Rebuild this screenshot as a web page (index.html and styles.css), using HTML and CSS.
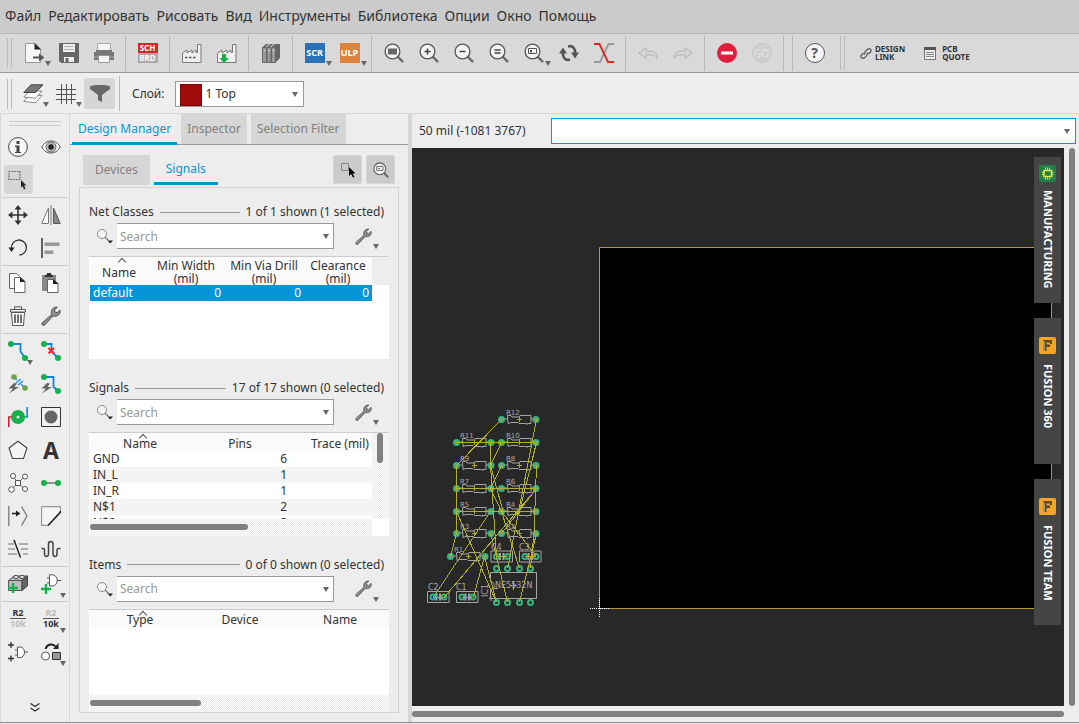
FILE: index.html
```html
<!DOCTYPE html>
<html lang="ru">
<head>
    <meta charset="UTF-8">
    <meta name="viewport" content="width=device-width, initial-scale=1.0">
    <title>Board</title>
    <link rel="stylesheet" href="styles.css">
</head>
<body>
    <svg class="sprite" aria-hidden="true">
        <symbol id="zoomBase" viewBox="0 0 20 20">
            <path d="M13.500 13.500L19 19" stroke="#666" stroke-width="2.400"/>
            <circle cx="8.500" cy="8.500" r="7.400" fill="#f2f2f2" stroke="#555" stroke-width="1.300"/>
        </symbol>
        <symbol id="find" viewBox="0 0 16 16">
            <circle cx="5" cy="6" r="4.500" fill="#f6f6f6" stroke="#888"/>
            <path d="M8.300 9.300L11.500 12.500" stroke="#888" stroke-width="1.500"/>
            <path d="M10.500 12.500h5.500L13.250 15.500z" fill="#222"/>
        </symbol>
        <symbol id="wrench" viewBox="0 0 20 20">
            <path d="M1 17L10.500 8.500C9.300 4 12.500.5 16.300 1.200L13.500 4.200L14 6L16 6.700L19 4C20 8 16 11.500 12 10L3.500 19.200C2 20 .3 18.500 1 17z" fill="#8c8c8c" stroke="#555" stroke-width="1"/>
        </symbol>
        <symbol id="bolt" viewBox="0 0 12 12">
            <path d="M6 1L.5 6.500L5 6.500L1 11.500L11 5L6.500 5L9 1.500z" fill="#666"/>
        </symbol>
        <symbol id="res" viewBox="0 0 44 14" overflow="visible">
            <path d="M7.500 3.500h3.500l1 1.500h7l1-1.500h11v8h-4v1l-1-1h-7l-1-1h-7l-3 1zM4 7h3M31 7h3" fill="none" stroke="#a6a6a6"/>
            <path d="M17 7.500h5M19.500 5v5" stroke="#a9a930"/>
            <use href="#pad" x="1.500" y="7.500"/>
            <use href="#pad" x="36" y="7.500"/>
        </symbol>
        <symbol id="fusion" viewBox="0 0 17 17">
            <rect width="17" height="17" rx="2" fill="#f5a524"/>
            <path d="M4 3h9v4h-2V5.500H7.500v2H11V10H7.500v4H4z" fill="#5b4a2e"/>
            <path d="M4 3l2 2v9H4z" fill="#9a958c"/>
        </symbol>
    </svg>

    <nav class="menubar">
        <a href="#">Файл</a>
        <a href="#">Редактировать</a>
        <a href="#">Рисовать</a>
        <a href="#">Вид</a>
        <a href="#">Инструменты</a>
        <a href="#">Библиотека</a>
        <a href="#">Опции</a>
        <a href="#">Окно</a>
        <a href="#">Помощь</a>
    </nav>

    <div class="toolbar">
        <span class="grip"></span>
        <button class="drop" title="Open"><svg viewBox="0 0 20 20"><path d="M1.500.5H11L16.500 6V19.500H1.500z" fill="#f7f7f7" stroke="#999"/><path d="M10.500 0L17 6.500H10.500z" fill="#222"/><path d="M9 13.500h6V10.500L20.500 14.500L15 18.500V15.500H9z" fill="#555"/></svg></button>
        <button title="Save"><svg viewBox="0 0 20 20"><path d="M0 0H20V20H2L0 18z" fill="#666"/><path d="M4 1H16V9H4z" fill="#eee"/><path d="M5.500 3.500h9M5.500 6.500h9" stroke="#aaa"/><path d="M5 14H15V19H5z" fill="#eee"/><path d="M6.500 15h3v4h-3z" fill="#666"/></svg></button>
        <button title="Print"><svg viewBox="0 0 20 20"><path d="M3.500.5h13v8h-13z" fill="#f4f4f4" stroke="#aaa"/><path d="M0 9h2V7h16v2h2v8H0z" fill="#777"/><path d="M0 14h20" stroke="#aaa"/><path d="M4.500 12.500h11v7h-11z" fill="#f4f4f4" stroke="#999"/></svg></button>
        <span class="sep"></span>
        <button title="Schematic"><span class="schbrd"><b>SCH</b><b>BRD</b></span></button>
        <span class="sep"></span>
        <button title="Manufacture"><svg viewBox="0 0 20 20"><path d="M.5 19.500V10L5 7v3l5-3v3l4-3V9.500h1.500V1.500h3.500v18z" fill="#f1f1f1" stroke="#777"/><path d="M3 14.500h11" stroke="#555" stroke-width="1.500" stroke-dasharray="2.500 1.500"/></svg></button>
        <button title="CAM"><svg viewBox="0 0 20 20"><path d="M.5 19.500V10L5 7v3l5-3v3l4-3V9.500h1.500V1.500h3.500v18z" fill="#f1f1f1" stroke="#777"/><path d="M5 11h4v4h3L7 20L2.500 15H5z" fill="#10b048"/></svg></button>
        <span class="sep"></span>
        <button title="Library"><svg viewBox="0 0 20 20"><path d="M1 4.500L5 1H19L14.500 4.500zM14.500 4.500L19 1V15L14.500 19.500z" fill="#666"/><path d="M1.500 4.500h4v15h-4zM6 4.500h4v15H6zM10.500 4.500h4v15h-4z" fill="#999" stroke="#666"/><path d="M2.500 7.500h2M7 7.500h2M11.500 7.500h2M5 4l4-3M9.500 4l4-3" stroke="#ddd"/></svg></button>
        <span class="sep"></span>
        <button class="drop" title="Script"><span class="tile blue">SCR</span></button>
        <button class="drop" title="ULP"><span class="tile orange">ULP</span></button>
        <span class="sep"></span>
        <button title="Zoom to fit"><svg viewBox="0 0 20 20"><use href="#zoomBase"/><path d="M4 5.500h9v6H4z" fill="#666"/></svg></button>
        <button title="Zoom in"><svg viewBox="0 0 20 20"><use href="#zoomBase"/><path d="M5.500 8.500h6M8.500 5.500v6" stroke="#444" stroke-width="1.500"/></svg></button>
        <button title="Zoom out"><svg viewBox="0 0 20 20"><use href="#zoomBase"/><path d="M5.500 8.500h6" stroke="#444" stroke-width="1.500"/></svg></button>
        <button title="Zoom redraw"><svg viewBox="0 0 20 20"><use href="#zoomBase"/><path d="M5.500 7h6M5.500 10h6" stroke="#444" stroke-width="1.400"/></svg></button>
        <button class="drop" title="Zoom select"><svg viewBox="0 0 20 20"><use href="#zoomBase"/><path d="M4.500 5.500h8v5h-8z" fill="none" stroke="#555"/><path d="M6 7h2v2.500H6z" fill="#555"/></svg></button>
        <button title="Redraw"><svg viewBox="0 0 20 20"><path d="M11 16.500C6 18 3.500 14 4 10M9 3.500C14 2 16.500 6 16 10" fill="none" stroke="#555" stroke-width="2.600"/><path d="M0 10.500L4 4.500L8 10.500zM12 9.500H20L16 15.500z" fill="#555"/></svg></button>
        <button title="Ripup"><svg viewBox="0 0 20 20"><path d="M20 1h-5.500L6 19H0" fill="none" stroke="#999" stroke-width="1.800"/><path d="M0 1h5.500L14 19h6" fill="none" stroke="#d42a20" stroke-width="1.800"/></svg></button>
        <span class="sep"></span>
        <button title="Undo" disabled><svg viewBox="0 0 20 20"><path d="M.8 10L8 4.500V8h5c4 0 6 3 6.200 7.500C17.500 12.500 16 12 13 12H8v3.500z" fill="#d4d4d4" stroke="#b3b3b3"/></svg></button>
        <button title="Redo" disabled><svg viewBox="0 0 20 20"><path d="M19.200 10L12 4.500V8H7C3 8 1 11 .8 15.500C2.500 12.500 4 12 7 12h5v3.500z" fill="#d4d4d4" stroke="#b3b3b3"/></svg></button>
        <span class="sep"></span>
        <button title="Stop"><svg viewBox="0 0 20 20"><circle cx="10" cy="10" r="10" fill="#df1f3d"/><path d="M4 10h12" stroke="#fff" stroke-width="3"/></svg></button>
        <button title="Go" disabled><span class="go">GO</span></button>
        <span class="sep"></span>
        <span class="sep"></span>
        <button title="Help"><span class="help">?</span></button>
        <span class="grip end"></span>
        <button class="labelled"><svg viewBox="0 0 12 12"><path d="M5 7C3.500 5.500 6 3 7.500 1.700C9.500 0 12.500 2.500 10.500 4.500L8.500 6.500M7 5C8.500 6.500 6 9 4.500 10.300C2.500 12 -.5 9.500 1.500 7.500L3.500 5.500" fill="none" stroke="#555" stroke-width="1.200"/></svg><span>DESIGN<br>LINK</span></button>
        <button class="labelled quote"><svg viewBox="0 0 12 13"><path d="M.5.5h11v12H.5z" fill="#eee" stroke="#777"/><path d="M0 1.500h12" stroke="#555" stroke-width="3"/><path d="M2 5.500h8M2 7.500h8M2 9.500h8" stroke="#888"/></svg><span>PCB<br>QUOTE</span></button>
    </div>

    <div class="toolbar second">
        <span class="grip"></span>
        <button class="drop" title="Layers"><svg viewBox="0 0 20 20"><path d="M.8 17.500L6.500 11.500H19L12.500 18.800z" fill="#fff" stroke="#888"/><path d="M.8 13L6.500 7H19L12.500 14.300z" fill="#fff" stroke="#888"/><path d="M.8 8.500L8 .8H20L12.500 8.500z" fill="#777" stroke="#444"/></svg></button>
        <button class="drop" title="Grid"><svg viewBox="0 0 20 20"><path d="M0 5.500h20M0 10.500h20M0 15.500h20M5.500 0v20M10.500 0v20M15.500 0v20" stroke="#555"/></svg></button>
        <button class="on" title="Filter"><svg viewBox="0 0 20 20"><path d="M0 2C5 .5 15 .5 20 2V5L12 11V18L8 16V11L0 5z" fill="#666"/></svg></button>
        <span class="sep"></span>
        <label for="layer">Слой:</label>
        <span class="layer">
            <select id="layer">
                <option>1 Top</option>
                <option>16 Bottom</option>
            </select>
            <i class="arrow"></i>
        </span>
    </div>

    <main>
        <aside class="palette">
            <span class="hgrip"></span>
            <div class="group">
                <button title="Info"><svg viewBox="0 0 20 20"><circle cx="10" cy="10" r="9.400" fill="#f6f6f6" stroke="#444"/><path d="M8.500 4h3v3h-3zM7 8.500h4.500v6.500H13v1H7v-1h1.500V10H7z" fill="#444"/></svg></button>
                <button title="Show"><svg viewBox="0 0 20 20"><path d="M.8 10C5 2 15 2 19.200 10C15 18 5 18 .8 10z" fill="#fff" stroke="#444"/><circle cx="10" cy="10" r="5" fill="#bbb" stroke="#666"/><circle cx="10" cy="10" r="2.700" fill="#222"/></svg></button>
                <button class="on" title="Group"><svg viewBox="0 0 20 20"><path d="M1 1.500h11v8H1z" fill="none" stroke="#555" stroke-width="1.200" stroke-dasharray="1.500 1.200"/><path d="M13 10l5.500 5.500h-2.500l1.500 3-1.500 1-1.500-3.500-1.500 1.500z" fill="#222"/></svg></button>
            </div>
            <div class="group">
                <button title="Move"><svg viewBox="0 0 20 20"><path d="M3 10h14M10 3v14" stroke="#333" stroke-width="1.600"/><path d="M0 10l4.500-3.500v7zM20 10l-4.500-3.500v7zM10 0L6.500 4.500h7zM10 20l-3.500-4.500h7z" fill="#333"/></svg></button>
                <button title="Mirror"><svg viewBox="0 0 20 20"><path d="M7.500 3v15.500H.8z" fill="#fff" stroke="#777"/><path d="M12.500 3v15.500h6.700z" fill="#888" stroke="#555"/><path d="M10 0v20" stroke="#777"/></svg></button>
                <button title="Rotate"><svg viewBox="0 0 20 20"><path d="M3.500 10.500A7.500 7.500 0 1 1 11.500 17" fill="none" stroke="#333" stroke-width="1.300"/><path d="M.5 9.500H6.500L3.500 14z" fill="#222"/></svg></button>
                <button title="Align"><svg viewBox="0 0 20 20"><path d="M1 0v20" stroke="#333" stroke-width="1.500"/><path d="M3.500 4.500h15v3.500h-15zM3.500 12.500h9v3.500h-9z" fill="#999"/></svg></button>
            </div>
            <div class="group">
                <button title="Copy"><svg viewBox="0 0 20 20"><path d="M1.500.5h7l3 3v12h-10z" fill="#f7f7f7" stroke="#666"/><path d="M6.500 4.500h6l4.500 4v11H6.500z" fill="#fff" stroke="#666"/><path d="M12 4l5.500 5H12z" fill="#222"/></svg></button>
                <button title="Paste"><svg viewBox="0 0 20 20"><path d="M1 2h14v16H1z" fill="#888"/><path d="M4 4V2l2-.5V0h4v1.500l2 .5v2z" fill="#333"/><path d="M6.500 6.500h6l4.500 4v9H6.500z" fill="#fff" stroke="#666"/><path d="M12 6l5.500 5H12z" fill="#222"/></svg></button>
                <button title="Delete"><svg viewBox="0 0 20 20"><path d="M6.500 3V.8h7V3" fill="none" stroke="#555"/><path d="M2.500 3.500h15v2.500h-15zM3.500 6.500h13l-1 13h-11z" fill="#f7f7f7" stroke="#555"/><path d="M7 8.500v8.500M10 8.500v8.500M13 8.500v8.500" stroke="#444" stroke-width="1.500"/></svg></button>
                <button title="Change"><svg viewBox="0 0 20 20"><use href="#wrench"/></svg></button>
            </div>
            <div class="group">
                <button class="drop" title="Route"><svg viewBox="0 0 20 20"><path d="M3 3h9.500v7.500L17 17" fill="none" stroke="#0b87e0" stroke-width="1.800"/><circle cx="3" cy="3" r="3" fill="#17b04c"/><circle cx="17" cy="17" r="3" fill="#17b04c"/></svg></button>
                <button title="Ripup"><svg viewBox="0 0 20 20"><path d="M3 3h7.500v7.500L17 17" fill="none" stroke="#0b87e0" stroke-width="1.800"/><circle cx="3" cy="3" r="3" fill="#17b04c"/><circle cx="17" cy="17" r="3" fill="#17b04c"/><path d="M7.500 7l5.500 5.500M13 7l-5.500 5.500" stroke="#f22b2b" stroke-width="2.200"/></svg></button>
                <button title="Fanout"><svg viewBox="0 0 20 20"><use href="#bolt" x="0" y="8" width="12" height="12"/><path d="M8 9l5-4M10 11l5-4M6 3l3 3M13 10l4 4" stroke="#2a92e0" stroke-width="1.500"/><circle cx="6" cy="3" r="2.800" fill="#6ca34a"/><circle cx="17" cy="14" r="2.800" fill="#6ca34a"/></svg></button>
                <button title="Autoroute"><svg viewBox="0 0 20 20"><use href="#bolt" x="0" y="8" width="12" height="12"/><path d="M3 3h9.500v10L17 17" fill="none" stroke="#0b87e0" stroke-width="1.800"/><circle cx="3" cy="3" r="3" fill="#17b04c"/><circle cx="17" cy="17" r="3" fill="#17b04c"/></svg></button>
                <button title="Via"><svg viewBox="0 0 20 20"><path d="M.8 20V10H5" fill="none" stroke="#d3202f" stroke-width="1.600"/><path d="M19.200 0v10H15" fill="none" stroke="#0b87e0" stroke-width="1.600"/><circle cx="10" cy="10" r="7" fill="#17b04c"/><circle cx="10" cy="10" r="1.500" fill="#fff"/></svg></button>
                <button title="Hole"><svg viewBox="0 0 20 20"><path d="M.5.5h19v19H.5z" fill="#f0f0f0" stroke="#333"/><circle cx="10" cy="10" r="6.500" fill="#666"/></svg></button>
                <button title="Polygon"><svg viewBox="0 0 20 20"><path d="M10 1.200L19 8L15.500 18.500h-11L1 8z" fill="#f4f4f4" stroke="#444" stroke-width="1.100"/></svg></button>
                <button title="Text"><span class="letter">A</span></button>
                <button title="Ratsnest"><svg viewBox="0 0 20 20"><path d="M5 3l5 7L17 3M3 17l7-7 7 6" fill="none" stroke="#666"/><g fill="#fff" stroke="#555"><circle cx="5" cy="3" r="2.500"/><circle cx="17" cy="3.500" r="2.500"/><circle cx="3.500" cy="16.500" r="2.800"/><circle cx="17" cy="16" r="2.500"/><path d="M7.500 7.500h5v5h-5z"/></g></svg></button>
                <button title="Signal"><svg viewBox="0 0 20 20"><path d="M3 10h14" stroke="#777" stroke-width="1.500"/><circle cx="3" cy="10" r="3" fill="#17b04c"/><circle cx="17" cy="10" r="3" fill="#17b04c"/></svg></button>
                <button title="Split"><svg viewBox="0 0 20 20"><path d="M.8 0v20" stroke="#777" stroke-width="1.300"/><path d="M4 7.500h5" stroke="#222" stroke-width="1.600"/><path d="M8 4.500l4.500 3-4.500 3z" fill="#222"/><path d="M13.500.5L19 10l-5.500 9.500" fill="none" stroke="#777" stroke-width="1.300"/></svg></button>
                <button title="Miter"><svg viewBox="0 0 20 20"><path d="M19.500 6V.5H.5v19H7" fill="#f5f5f5" stroke="#999" stroke-width="1.300"/><path d="M19.500 5v1L7 19.500" fill="none" stroke="#222" stroke-width="1.600"/></svg></button>
                <button title="Slice"><svg viewBox="0 0 20 20"><path d="M0 5h6M11 5h9M0 10h7M13 10h7M0 15h9M15 15h5" stroke="#999" stroke-width="1.400"/><path d="M6 1L12.500 18.500" stroke="#222" stroke-width="1.500"/></svg></button>
                <button title="Meander"><svg viewBox="0 0 20 20"><path d="M.5 9.500H2Q3.500 9.500 3.500 11.500V14.500Q3.500 17.500 5.500 17.500T7.500 14.500V5Q7.500 2.500 9.750 2.500T12 5V14.500Q12 17.500 14 17.500T16 14.500V11.500Q16 9.500 17.500 9.500H19.500" fill="none" stroke="#444" stroke-width="1.500"/></svg></button>
            </div>
            <div class="group">
                <button title="Add"><svg viewBox="0 0 20 20"><path d="M.5 6.500L6 2h13.500L14 6.500v10H.5z" fill="#bbb" stroke="#555"/><path d="M14 6.500L19.500 2v10L14 16.500z" fill="#666" stroke="#444"/><path d="M.5 6.500H14" stroke="#555"/><ellipse cx="8" cy="3" rx="2.500" ry="1.500" fill="#eee" stroke="#444"/><ellipse cx="14" cy="3" rx="2.500" ry="1.500" fill="#eee" stroke="#444"/><path d="M5 9v10M0 14h10" stroke="#17b04c" stroke-width="2.400"/></svg></button>
                <button class="drop" title="Add part"><svg viewBox="0 0 20 20"><path d="M8.500.8H11C18 1 18 12 11 12H8.500zM6 4h2.500M6 9h2.500M16 6.500h4" fill="#fff" stroke="#555"/><path d="M5 10v10M0 15h10" stroke="#17b04c" stroke-width="2.400"/></svg></button>
            </div>
            <div class="group last">
                <button title="Name"><span class="r2"><b>R2</b><b class="dim">10k</b></span></button>
                <button class="drop" title="Value"><span class="r2"><b class="dim">R2</b><b>10k</b></span></button>
                <button title="Smash"><svg viewBox="0 0 20 20"><path d="M9.500 5H12C18 5 18 15.500 12 15.500H9.500zM7 8h2.500M7 13h2.500M16.500 10h3.500" fill="#fff" stroke="#555"/><path d="M3 0v6M0 3h6M3 13.500v6M0 16.500h6" stroke="#333" stroke-width="1.400"/></svg></button>
                <button class="drop" title="Replace"><svg viewBox="0 0 20 20"><path d="M4.500 7C6 2 12 1 14.500 4.500" fill="none" stroke="#222" stroke-width="2"/><path d="M12 7h5.500V1z" fill="#222"/><circle cx="4.500" cy="14" r="4" fill="#fff" stroke="#555"/><path d="M11.500 10.500h8v7h-8z" fill="#999" stroke="#333"/></svg></button>
            </div>
            <button class="more" title="More"><svg viewBox="0 0 10 9"><path d="M.5.5L5 3.500L9.500.5M.5 5L5 8L9.500 5" fill="none" stroke="#333" stroke-width="1.300"/></svg></button>
        </aside>

        <section class="panel">
            <div class="tabs">
                <button class="tab active">Design Manager</button>
                <button class="tab">Inspector</button>
                <button class="tab">Selection Filter</button>
            </div>
            <div class="subtabs">
                <button class="tab">Devices</button>
                <button class="tab active">Signals</button>
                <button class="tool" title="Select"><svg viewBox="0 0 16 16"><path d="M1.500 1.500h7v7h-7z" fill="none" stroke="#888"/><path d="M9 5l6.500 6.500H12.500l2 3.500-1.500.5-2-3.500L9 14z" fill="#000"/></svg></button>
                <button class="tool" title="Zoom to selection"><svg viewBox="0 0 20 20"><use href="#zoomBase"/><path d="M4.500 5.500h8v5h-8zM6 8h3" fill="none" stroke="#555"/></svg></button>
            </div>
            <div class="frame">
                <section class="block">
                    <div class="head"><span>Net Classes</span><hr><span>1 of 1 shown (1 selected)</span></div>
                    <div class="searchrow">
                        <svg class="find"><use href="#find"/></svg>
                        <span class="combo"><input type="text" placeholder="Search" aria-label="Search net classes"><i class="arrow"></i></span>
                        <button class="drop" title="Options"><svg><use href="#wrench"/></svg></button>
                    </div>
                    <div class="grid">
                        <div class="view">
                            <table class="classes">
                                <colgroup><col class="c1"><col class="c2"><col class="c3"><col class="c4"></colgroup>
                                <thead><tr><th class="sorted">Name</th><th>Min Width<br>(mil)</th><th>Min Via Drill<br>(mil)</th><th>Clearance<br>(mil)</th></tr></thead>
                                <tbody><tr class="selected"><td>default</td><td>0</td><td>0</td><td>0</td></tr></tbody>
                            </table>
                        </div>
                        <div class="stub"></div>
                    </div>
                </section>
                <section class="block">
                    <div class="head"><span>Signals</span><hr><span>17 of 17 shown (0 selected)</span></div>
                    <div class="searchrow">
                        <svg class="find"><use href="#find"/></svg>
                        <span class="combo"><input type="text" placeholder="Search" aria-label="Search signals"><i class="arrow"></i></span>
                        <button class="drop" title="Options"><svg><use href="#wrench"/></svg></button>
                    </div>
                    <div class="grid">
                        <div class="view">
                            <table class="wide">
                                <thead><tr><th class="sorted">Name</th><th>Pins</th><th>Trace (mil)</th></tr></thead>
                                <tbody>
                                    <tr><td>GND</td><td>6</td><td></td></tr>
                                    <tr><td>IN_L</td><td>1</td><td></td></tr>
                                    <tr><td>IN_R</td><td>1</td><td></td></tr>
                                    <tr><td>N$1</td><td>2</td><td></td></tr>
                                    <tr><td>N$2</td><td>2</td><td></td></tr>
                                </tbody>
                            </table>
                        </div>
                        <div class="vscroll"><i></i></div>
                        <div class="hscroll signals"><i></i></div>
                    </div>
                </section>
                <section class="block">
                    <div class="head"><span>Items</span><hr><span>0 of 0 shown (0 selected)</span></div>
                    <div class="searchrow">
                        <svg class="find"><use href="#find"/></svg>
                        <span class="combo"><input type="text" placeholder="Search" aria-label="Search items"><i class="arrow"></i></span>
                        <button class="drop" title="Options"><svg><use href="#wrench"/></svg></button>
                    </div>
                    <div class="grid full">
                        <div class="view">
                            <table class="wide">
                                <thead><tr><th class="sorted">Type</th><th>Device</th><th>Name</th></tr></thead>
                            </table>
                        </div>
                        <div class="hscroll items"><i></i></div>
                    </div>
                </section>
            </div>
        </section>

        <section class="editor">
            <div class="command">
                <label for="cmd">50 mil (-1081 3767)</label>
                <span class="cmdbox"><input type="text" id="cmd"><i class="arrow"></i></span>
            </div>
            <div class="board">
                <svg class="drawing">
                    <defs>
                        <g id="pad"><circle r="2.500" fill="#a08b80" stroke="#35b57c" stroke-width="2"/></g>
                        <g id="hole"><circle r="2.500" fill="#282828" stroke="#35b57c" stroke-width="2"/></g>
                        <g id="cap"><path d="M-5.500-5.500h21.500v11h-21.500z" fill="none" stroke="#a6a6a6"/><path d="M3.500-3.500v7M7-3.500v7" stroke="#a6a6a6" stroke-width="2"/><use href="#hole"/><use href="#hole" x="11"/></g>
                    </defs>
                    <g transform="translate(-412 -148)">
                        <path d="M599.500 247.500h452v361h-452z" fill="#000" stroke="#b9973a"/>
                        <path d="M590 608.500h20M599.500 598v20" stroke="#fff" stroke-dasharray="1 1"/>

                        <!-- resistors -->
                        <g class="parts">
                            <use href="#res" x="500" y="412" width="44" height="14"/>
                            <use href="#res" x="500" y="435" width="44" height="14"/>
                            <use href="#res" x="500" y="458" width="44" height="14"/>
                            <use href="#res" x="500" y="481" width="44" height="14"/>
                            <use href="#res" x="500" y="504" width="44" height="14"/>
                            <use href="#res" x="500" y="526" width="44" height="14"/>
                            <use href="#res" x="455" y="435" width="44" height="14"/>
                            <use href="#res" x="455" y="458" width="44" height="14"/>
                            <use href="#res" x="455" y="481" width="44" height="14"/>
                            <use href="#res" x="455" y="504" width="44" height="14"/>
                            <use href="#res" x="455" y="526" width="44" height="14"/>
                            <use href="#res" x="449" y="549" width="44" height="14"/>
                        </g>

                        <!-- capacitors and the op-amp -->
                        <use href="#cap" x="496.500" y="556.500"/>
                        <use href="#cap" x="525" y="556.500"/>
                        <use href="#cap" x="433" y="597"/>
                        <use href="#cap" x="462" y="597"/>
                        <path d="M490.500 572.500h46v26h-46v-9c5 0 5-8 0-8zM489 598.500h4M491 596v5M494 588.500h4" fill="none" stroke="#a6a6a6"/>
                        <g>
                            <use href="#hole" x="496.500" y="568.500"/><use href="#hole" x="507.500" y="568.500"/><use href="#hole" x="519.500" y="568.500"/><use href="#hole" x="530.500" y="568.500"/>
                            <use href="#hole" x="496.500" y="602.500"/><use href="#hole" x="507.500" y="602.500"/><use href="#hole" x="519.500" y="602.500"/><use href="#hole" x="530.500" y="602.500"/>
                        </g>
                        <g class="ref">
                            <text x="506" y="415">R12</text><text x="506" y="438">R10</text><text x="506" y="461">R8</text><text x="506" y="484">R6</text><text x="506" y="507">R4</text><text x="506" y="529">R2</text>
                            <text x="460" y="438">R11</text><text x="460" y="461">R9</text><text x="460" y="484">R7</text><text x="460" y="507">R5</text><text x="460" y="529">R3</text><text x="454" y="552">R1</text>
                        </g>
                        <g class="ref big">
                            <text x="491" y="550">C4</text><text x="519" y="550">C3</text><text x="428" y="590">C2</text><text x="456" y="590">C1</text>
                            <text x="495" y="588">NE5532N</text>
                            <text transform="translate(488 597) rotate(-90)">IC1</text>
                        </g>

                        <!-- airwires -->
                        <path class="air" d="M501.500 419.500L456.500 465.500V533.500L450.500 556.500M456.500 442.500H536.500M490.500 442.500V465.500L503 511M501.500 442.500L490.500 465.500M501.500 465.500L490.500 488.500M456.500 488.500H536.500M536.500 419.500L507.500 568.500M536.500 442.500L519.500 511M536.500 465.500L534 533.500L530.500 568.500M456.500 511.500H536.500M456.500 511.500L496.500 602.500M490.500 511.500L433.500 597M536.500 488.500L444.500 597M473.500 597L484.500 556.500M484.500 556.500L496.500 602.500M490.500 465.500L496.500 556.500L507.500 602.500M490.500 488.500L501.500 511.500L536.500 556.500M501.500 511.500L519.500 568.500M519.500 602.500L536.500 533.500M490.500 533.500L496.500 556.500M501.500 533.500L536.500 488.500M433 597H445M462 597H473M496 556.500H508M525 556.500H536M510 585.500h7M513.500 581v9"/>
                    </g>
                </svg>
                <div class="sidetabs">
                    <button><svg viewBox="0 0 17 17"><rect width="17" height="17" rx="2" fill="#218046"/><path d="M5 5.500h7.500v6H5z" fill="none" stroke="#f2e442" stroke-width="1.500"/><path d="M6.500 2.500v2M8.500 2.500v2M10.500 2.500v2M6.500 12.500v2M8.500 12.500v2M10.500 12.500v2M3 7.500h2M3 9.500h2M12.500 7.500h2M12.500 9.500h2" stroke="#f2e442"/></svg>MANUFACTURING</button>
                    <button><svg viewBox="0 0 17 17"><use href="#fusion"/></svg>FUSION 360</button>
                    <button><svg viewBox="0 0 17 17"><use href="#fusion"/></svg>FUSION TEAM</button>
                </div>
            </div>
            <div class="vbar"></div>
            <div class="hbar"></div>
        </section>
    </main>
</body>
</html>
```
FILE: styles.css
```css
* {
    box-sizing: border-box;
}
body {
    margin: 0;
    height: 100vh;
    display: flex;
    flex-direction: column;
    overflow: hidden;
    background-color: #ededed;
    color: #333;
    font: 12px/16px "Noto Sans", sans-serif;
}
button {
    position: relative;
    display: flex;
    align-items: center;
    justify-content: center;
    padding: 0;
    border: none;
    background: none;
    color: inherit;
    font: inherit;
}
button svg {
    display: block;
    width: 20px;
    height: 20px;
}
input, select {
    border: none;
    border-radius: 0;
    background-color: #fff;
    color: #333;
    font: inherit;
    outline: none;
}
.sprite {
    position: absolute;
    width: 0;
    height: 0;
}
/* small dropdown triangles */
.arrow, .drop::after {
    position: absolute;
    border: 3px solid transparent;
    border-top: 5px solid #666;
    border-bottom: none;
    pointer-events: none;
}
.drop::after {
    content: "";
    right: 0;
    bottom: 6px;
}

/* menu */
.menubar {
    display: flex;
    flex: none;
    align-items: center;
    gap: 7px;
    height: 34px;
    padding: 0 5px 2px;
    background-color: #cbcbcb;
    border-bottom: 1px solid #b5b5b5;
    font-size: 14px;
}
.menubar a {
    color: #333;
    text-decoration: none;
}

/* toolbars */
.toolbar {
    display: flex;
    flex: none;
    align-items: center;
    height: 39px;
    padding-left: 7px;
    background-color: #d9d9d9;
    border-bottom: 1px solid #999;
}
.toolbar button {
    width: 35px;
    height: 38px;
}
.grip {
    width: 5px;
    height: 30px;
    margin-right: 4px;
    border: solid #bbb;
    border-width: 0 1px;
}
.grip.end {
    height: 34px;
    margin: 0 15px 0 8px;
}
.sep {
    width: 1px;
    height: 35px;
    margin: 0 4px;
    background-color: #b8b8b8;
}
.schbrd {
    display: grid;
    width: 20px;
    height: 20px;
    background-color: #aaa;
    color: #fff;
    font-size: 8px;
    line-height: 10px;
}
.schbrd b:first-child {
    background-color: #cf2a27;
}
.tile {
    width: 20px;
    height: 20px;
    color: #fff;
    font-size: 9px;
    font-weight: bold;
    line-height: 20px;
}
.blue {
    background-color: #2a72b8;
}
.orange {
    background-color: #dc833e;
}
.go, .help {
    width: 20px;
    height: 20px;
    border: 1px solid #c6c6c6;
    border-radius: 50%;
    background-color: #cfcfcf;
    color: #e4e4e4;
    font-size: 10px;
    line-height: 18px;
}
.help {
    border-color: #555;
    background-color: #f5f5f5;
    color: #555;
    font-size: 14px;
    font-weight: bold;
}
.toolbar .labelled {
    width: auto;
    gap: 3px;
    font-size: 8px;
    font-weight: bold;
    line-height: 8px;
    text-align: left;
}
.labelled svg {
    width: 12px;
    height: 13px;
}
.toolbar .quote {
    gap: 6px;
    margin-left: 19px;
}
.toolbar.second {
    height: 41px;
    padding-top: 1px;
    background-color: #eee;
    border-color: #d6d6d6;
}
.second button {
    width: 33px;
    height: 38px;
}
.second .on {
    width: 31px;
    height: 31px;
    margin-left: 2px;
    background-color: #d6d6d6;
    border-radius: 2px;
}
.second label {
    margin: 0 10px 0 8px;
}
.layer {
    position: relative;
    width: 129px;
    height: 26px;
}
.layer select {
    appearance: none;
    width: 100%;
    height: 100%;
    padding: 0 20px 0 30px;
    border: 1px solid #999;
}
.layer::before {
    content: "";
    position: absolute;
    top: 3px;
    left: 5px;
    width: 20px;
    height: 20px;
    background-color: #a00b0b;
    border: 1px solid #7d0606;
}
.layer .arrow {
    top: 11px;
    right: 6px;
}

main {
    display: flex;
    flex: 1;
    min-height: 0;
    margin-bottom: 1px;
    border-bottom: 1px solid #888;
}

/* tool palette */
.palette {
    display: flex;
    flex-direction: column;
    flex: none;
    width: 70px;
    padding: 0 1px;
    border: solid #d6d6d6;
    border-width: 0 1px;
}
.hgrip {
    flex: none;
    height: 5px;
    margin: 7px 7px 4px;
    border: solid #ccc;
    border-width: 1px 0;
}
.group {
    display: grid;
    grid-template-columns: 29px 29px;
    gap: 4px;
    padding: 2px 2px 3px;
    border-bottom: 1px solid #ccc;
}
.group.last {
    border-bottom: none;
}
.group button {
    width: 29px;
    height: 29px;
    padding-right: 1px;
}
.group .on {
    background-color: #d6d6d6;
    border-radius: 2px;
}
.group .drop::after {
    right: 0;
    bottom: 0;
}
.letter {
    font: bold 23px/28px "Noto Sans", sans-serif;
}
.r2 {
    display: grid;
    font-size: 9px;
    line-height: 10px;
}
.r2 b:first-child {
    border-bottom: 1px solid #555;
}
.dim {
    color: #bbb;
}
.more {
    margin: auto auto 10px;
}
.more svg {
    width: 10px;
    height: 9px;
}

/* design manager */
.panel {
    display: flex;
    flex-direction: column;
    flex: none;
    width: 342px;
    border-right: 4px solid #d6d6d6;
}
.tabs {
    display: flex;
    gap: 4px;
    height: 31px;
    padding-left: 2px;
    border-bottom: 1px solid #999;
}
.tab {
    height: 30px;
    padding: 0 6px;
    background-color: #d6d6d6;
    color: #808080;
}
.tab.active {
    height: 31px;
    padding-top: 2px;
    background: none;
    border-bottom: 3px solid #0696d7;
    color: #0696d7;
}
.subtabs {
    display: flex;
    gap: 4px;
    height: 31px;
    margin: 10px 13px 1px;
}
.subtabs .tab {
    padding: 0 12px;
}
.subtabs .active {
    height: 30px;
}
.tool {
    width: 29px;
    height: 29px;
    background-color: #cbcbcb;
    border: 1px solid #d6d6d6;
    border-radius: 2px;
}
.tool svg {
    width: 16px;
    height: 16px;
}
.active + .tool {
    margin-left: auto;
}
.frame {
    display: flex;
    flex-direction: column;
    flex: 1;
    gap: 20px;
    min-height: 0;
    margin: 0 9px 9px;
    padding: 15px 9px 0;
    border: 1px solid #d3d3d3;
}
.block {
    display: flex;
    flex-direction: column;
    flex: 1;
    min-height: 0;
}
.head {
    display: flex;
    align-items: center;
    gap: 6px;
    padding: 1px 5px 0 0;
}
.head hr {
    flex: 1;
    margin: 0;
    border: none;
    border-top: 1px solid #999;
}
.searchrow {
    display: flex;
    align-items: center;
    margin: 3px 10px 7px 8px;
}
.find {
    width: 16px;
    height: 16px;
    margin-right: 4px;
}
.combo {
    position: relative;
    flex: 1;
    height: 26px;
}
.combo input {
    width: 100%;
    height: 100%;
    padding: 0 20px 0 3px;
    border: solid #999;
    border-width: 1px 1px 1px 0;
}
.combo input::placeholder {
    color: #999;
}
.combo .arrow {
    top: 11px;
    right: 5px;
}
.searchrow button {
    width: 24px;
    height: 26px;
    margin-left: 21px;
    justify-content: flex-start;
}
.searchrow button svg {
    width: 17px;
    height: 17px;
}
.searchrow .drop::after {
    bottom: 0;
}
.grid {
    display: grid;
    grid-template: 1fr auto / 1fr 17px;
    flex: 1;
    min-height: 0;
    padding-left: 1px;
    background-color: #fff;
    border-top: 1px solid #ccc;
}
.grid.full {
    grid-template-columns: 1fr;
}
.view {
    overflow: hidden;
    min-height: 0;
}
.stub {
    height: 28px;
    background-color: #ededed;
}
table {
    table-layout: fixed;
    border-collapse: collapse;
    width: 100%;
}
table.wide {
    width: 300px;
}
.c1 {
    width: 58px;
}
.c2 {
    width: 76px;
}
.c3 {
    width: 80px;
}
th {
    position: relative;
    height: 18px;
    padding: 2px 0 0;
    background-color: #fafafa;
    font-weight: normal;
    line-height: 13px;
    white-space: nowrap;
}
.sorted::before {
    content: "";
    position: absolute;
    top: 2px;
    left: 50%;
    width: 5px;
    height: 5px;
    border: solid #555;
    border-width: 1px 0 0 1px;
    transform: rotate(45deg);
}
td {
    height: 16px;
    padding: 0 3px;
    line-height: 16px;
    text-align: right;
}
td:first-child {
    text-align: left;
}
tbody tr:nth-child(even) {
    background-color: #f4f4f4;
}
.selected {
    background-color: #0696d7;
    color: #fff;
}
.vscroll, .hscroll {
    background: repeating-conic-gradient(#fff 0 25%, #eaeaea 0 50%) 0 0 / 2px 2px;
}
.vscroll {
    padding-left: 5px;
}
.vscroll i {
    display: block;
    width: 6px;
    height: 30px;
    border-radius: 3px;
    background-color: #808080;
}
.hscroll {
    height: 17px;
    padding-top: 5px;
}
.hscroll i {
    display: block;
    height: 6px;
    border-radius: 3px;
    background-color: #808080;
}
.signals i {
    width: 56%;
}
.items i {
    width: 37%;
}

/* board editor */
.editor {
    display: grid;
    grid-template: 34px 1fr 16px / 1fr 15px;
    flex: 1;
    min-width: 0;
}
.command {
    grid-column: 1 / 3;
    display: flex;
    align-items: center;
    gap: 26px;
    padding: 0 3px 0 7px;
}
.cmdbox {
    position: relative;
    flex: 1;
    height: 26px;
}
.cmdbox input {
    width: 100%;
    height: 100%;
    padding: 0 20px 0 4px;
    border: 1px solid #0696d7;
}
.cmdbox .arrow {
    top: 11px;
    right: 6px;
}
.board {
    position: relative;
    overflow: hidden;
    background-color: #282828;
}
.drawing {
    display: block;
    width: 100%;
    height: 100%;
}
.air {
    fill: none;
    stroke: #b0b02c;
    shape-rendering: crispEdges;
}
.ref {
    fill: #aaa;
    font: 7px "DejaVu Sans", sans-serif;
}
.ref.big {
    font-size: 8px;
}
.sidetabs {
    position: absolute;
    top: 9px;
    right: 3px;
    display: grid;
    gap: 15px;
}
.sidetabs button {
    justify-content: flex-start;
    gap: 10px;
    width: 27px;
    height: 146px;
    padding-top: 19px;
    background-color: #454545;
    color: #fff;
    font-size: 11px;
    font-weight: bold;
    writing-mode: vertical-rl;
}
.sidetabs button:first-child {
    gap: 8px;
    padding-top: 8px;
}
.sidetabs svg {
    width: 17px;
    height: 17px;
}
.vbar {
    width: 6px;
    margin-left: 5px;
    border-radius: 3px;
    background-color: #808080;
}
.hbar {
    height: 6px;
    margin-top: 5px;
    border-radius: 3px;
    background-color: #808080;
}
```
